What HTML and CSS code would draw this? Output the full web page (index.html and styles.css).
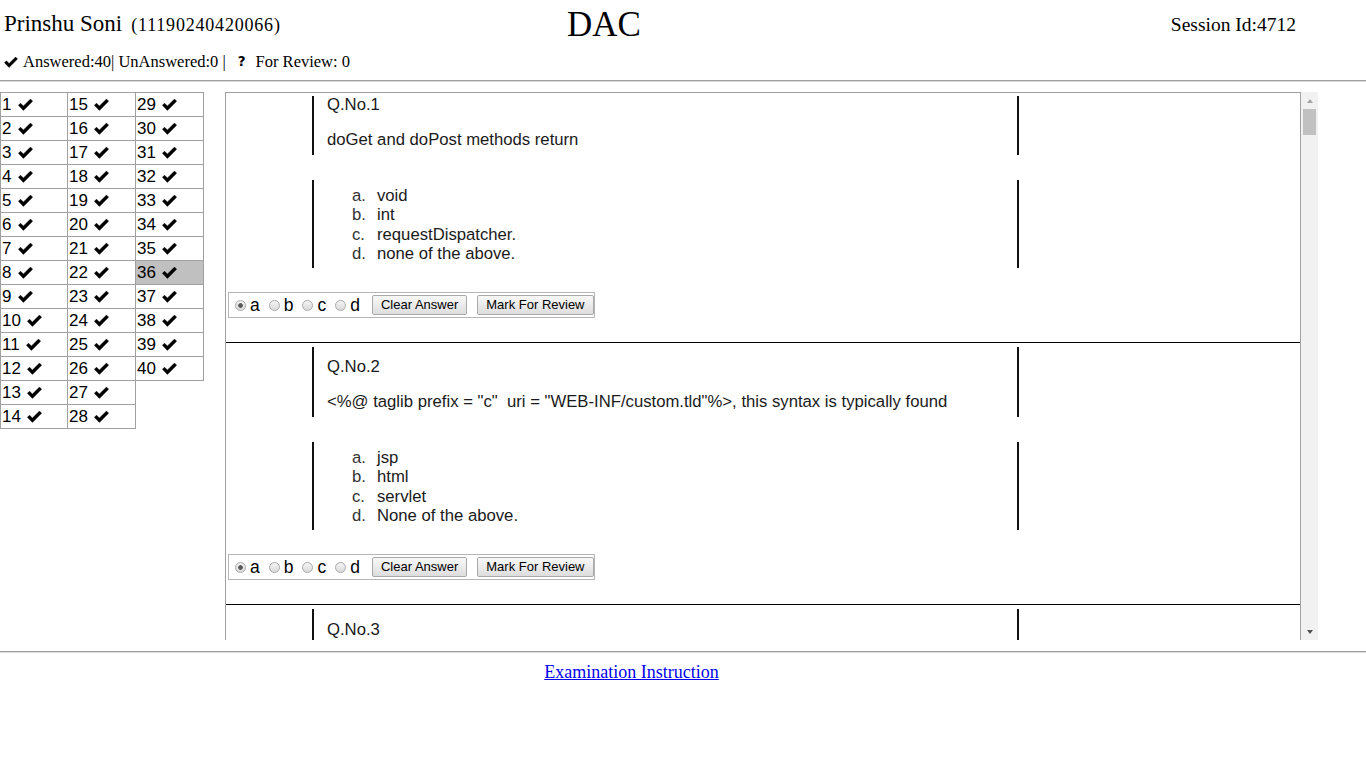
FILE: index.html
```html
<!DOCTYPE html>
<html lang="en">
<head>
<meta charset="utf-8">
<title>DAC Examination</title>
<link rel="stylesheet" href="styles.css">
</head>
<body>
<header class="top">
  <div class="name">Prinshu Soni<span class="prn">(11190240420066)</span></div>
  <div class="course">DAC</div>
  <div class="session">Session Id:4712</div>
</header>
<div class="stats"><svg class="chk-s" viewBox="0 0 15 12" width="14" height="11"><polygon points="0.4,6.3 2.5,4.2 5.4,7.1 12.5,0.1 14.6,2.2 5.4,11.4" fill="#000" stroke="#000" stroke-width="0.5" stroke-linejoin="round"/></svg>Answered:40| UnAnswered:0 |<span class="qm">?</span>For Review: 0</div>
<div class="rule"></div>

<main class="main">
  <nav class="qnav">
    <div class="cell">1<svg class="chk" viewBox="0 0 15 12"><polygon points="0.4,6.3 2.5,4.2 5.4,7.1 12.5,0.1 14.6,2.2 5.4,11.4"/></svg></div>
    <div class="cell">2<svg class="chk" viewBox="0 0 15 12"><polygon points="0.4,6.3 2.5,4.2 5.4,7.1 12.5,0.1 14.6,2.2 5.4,11.4"/></svg></div>
    <div class="cell">3<svg class="chk" viewBox="0 0 15 12"><polygon points="0.4,6.3 2.5,4.2 5.4,7.1 12.5,0.1 14.6,2.2 5.4,11.4"/></svg></div>
    <div class="cell">4<svg class="chk" viewBox="0 0 15 12"><polygon points="0.4,6.3 2.5,4.2 5.4,7.1 12.5,0.1 14.6,2.2 5.4,11.4"/></svg></div>
    <div class="cell">5<svg class="chk" viewBox="0 0 15 12"><polygon points="0.4,6.3 2.5,4.2 5.4,7.1 12.5,0.1 14.6,2.2 5.4,11.4"/></svg></div>
    <div class="cell">6<svg class="chk" viewBox="0 0 15 12"><polygon points="0.4,6.3 2.5,4.2 5.4,7.1 12.5,0.1 14.6,2.2 5.4,11.4"/></svg></div>
    <div class="cell">7<svg class="chk" viewBox="0 0 15 12"><polygon points="0.4,6.3 2.5,4.2 5.4,7.1 12.5,0.1 14.6,2.2 5.4,11.4"/></svg></div>
    <div class="cell">8<svg class="chk" viewBox="0 0 15 12"><polygon points="0.4,6.3 2.5,4.2 5.4,7.1 12.5,0.1 14.6,2.2 5.4,11.4"/></svg></div>
    <div class="cell">9<svg class="chk" viewBox="0 0 15 12"><polygon points="0.4,6.3 2.5,4.2 5.4,7.1 12.5,0.1 14.6,2.2 5.4,11.4"/></svg></div>
    <div class="cell">10<svg class="chk" viewBox="0 0 15 12"><polygon points="0.4,6.3 2.5,4.2 5.4,7.1 12.5,0.1 14.6,2.2 5.4,11.4"/></svg></div>
    <div class="cell">11<svg class="chk" viewBox="0 0 15 12"><polygon points="0.4,6.3 2.5,4.2 5.4,7.1 12.5,0.1 14.6,2.2 5.4,11.4"/></svg></div>
    <div class="cell">12<svg class="chk" viewBox="0 0 15 12"><polygon points="0.4,6.3 2.5,4.2 5.4,7.1 12.5,0.1 14.6,2.2 5.4,11.4"/></svg></div>
    <div class="cell">13<svg class="chk" viewBox="0 0 15 12"><polygon points="0.4,6.3 2.5,4.2 5.4,7.1 12.5,0.1 14.6,2.2 5.4,11.4"/></svg></div>
    <div class="cell">14<svg class="chk" viewBox="0 0 15 12"><polygon points="0.4,6.3 2.5,4.2 5.4,7.1 12.5,0.1 14.6,2.2 5.4,11.4"/></svg></div>
    <div class="cell">15<svg class="chk" viewBox="0 0 15 12"><polygon points="0.4,6.3 2.5,4.2 5.4,7.1 12.5,0.1 14.6,2.2 5.4,11.4"/></svg></div>
    <div class="cell">16<svg class="chk" viewBox="0 0 15 12"><polygon points="0.4,6.3 2.5,4.2 5.4,7.1 12.5,0.1 14.6,2.2 5.4,11.4"/></svg></div>
    <div class="cell">17<svg class="chk" viewBox="0 0 15 12"><polygon points="0.4,6.3 2.5,4.2 5.4,7.1 12.5,0.1 14.6,2.2 5.4,11.4"/></svg></div>
    <div class="cell">18<svg class="chk" viewBox="0 0 15 12"><polygon points="0.4,6.3 2.5,4.2 5.4,7.1 12.5,0.1 14.6,2.2 5.4,11.4"/></svg></div>
    <div class="cell">19<svg class="chk" viewBox="0 0 15 12"><polygon points="0.4,6.3 2.5,4.2 5.4,7.1 12.5,0.1 14.6,2.2 5.4,11.4"/></svg></div>
    <div class="cell">20<svg class="chk" viewBox="0 0 15 12"><polygon points="0.4,6.3 2.5,4.2 5.4,7.1 12.5,0.1 14.6,2.2 5.4,11.4"/></svg></div>
    <div class="cell">21<svg class="chk" viewBox="0 0 15 12"><polygon points="0.4,6.3 2.5,4.2 5.4,7.1 12.5,0.1 14.6,2.2 5.4,11.4"/></svg></div>
    <div class="cell">22<svg class="chk" viewBox="0 0 15 12"><polygon points="0.4,6.3 2.5,4.2 5.4,7.1 12.5,0.1 14.6,2.2 5.4,11.4"/></svg></div>
    <div class="cell">23<svg class="chk" viewBox="0 0 15 12"><polygon points="0.4,6.3 2.5,4.2 5.4,7.1 12.5,0.1 14.6,2.2 5.4,11.4"/></svg></div>
    <div class="cell">24<svg class="chk" viewBox="0 0 15 12"><polygon points="0.4,6.3 2.5,4.2 5.4,7.1 12.5,0.1 14.6,2.2 5.4,11.4"/></svg></div>
    <div class="cell">25<svg class="chk" viewBox="0 0 15 12"><polygon points="0.4,6.3 2.5,4.2 5.4,7.1 12.5,0.1 14.6,2.2 5.4,11.4"/></svg></div>
    <div class="cell">26<svg class="chk" viewBox="0 0 15 12"><polygon points="0.4,6.3 2.5,4.2 5.4,7.1 12.5,0.1 14.6,2.2 5.4,11.4"/></svg></div>
    <div class="cell">27<svg class="chk" viewBox="0 0 15 12"><polygon points="0.4,6.3 2.5,4.2 5.4,7.1 12.5,0.1 14.6,2.2 5.4,11.4"/></svg></div>
    <div class="cell">28<svg class="chk" viewBox="0 0 15 12"><polygon points="0.4,6.3 2.5,4.2 5.4,7.1 12.5,0.1 14.6,2.2 5.4,11.4"/></svg></div>
    <div class="cell">29<svg class="chk" viewBox="0 0 15 12"><polygon points="0.4,6.3 2.5,4.2 5.4,7.1 12.5,0.1 14.6,2.2 5.4,11.4"/></svg></div>
    <div class="cell">30<svg class="chk" viewBox="0 0 15 12"><polygon points="0.4,6.3 2.5,4.2 5.4,7.1 12.5,0.1 14.6,2.2 5.4,11.4"/></svg></div>
    <div class="cell">31<svg class="chk" viewBox="0 0 15 12"><polygon points="0.4,6.3 2.5,4.2 5.4,7.1 12.5,0.1 14.6,2.2 5.4,11.4"/></svg></div>
    <div class="cell">32<svg class="chk" viewBox="0 0 15 12"><polygon points="0.4,6.3 2.5,4.2 5.4,7.1 12.5,0.1 14.6,2.2 5.4,11.4"/></svg></div>
    <div class="cell">33<svg class="chk" viewBox="0 0 15 12"><polygon points="0.4,6.3 2.5,4.2 5.4,7.1 12.5,0.1 14.6,2.2 5.4,11.4"/></svg></div>
    <div class="cell">34<svg class="chk" viewBox="0 0 15 12"><polygon points="0.4,6.3 2.5,4.2 5.4,7.1 12.5,0.1 14.6,2.2 5.4,11.4"/></svg></div>
    <div class="cell">35<svg class="chk" viewBox="0 0 15 12"><polygon points="0.4,6.3 2.5,4.2 5.4,7.1 12.5,0.1 14.6,2.2 5.4,11.4"/></svg></div>
    <div class="cell current">36<svg class="chk" viewBox="0 0 15 12"><polygon points="0.4,6.3 2.5,4.2 5.4,7.1 12.5,0.1 14.6,2.2 5.4,11.4"/></svg></div>
    <div class="cell">37<svg class="chk" viewBox="0 0 15 12"><polygon points="0.4,6.3 2.5,4.2 5.4,7.1 12.5,0.1 14.6,2.2 5.4,11.4"/></svg></div>
    <div class="cell">38<svg class="chk" viewBox="0 0 15 12"><polygon points="0.4,6.3 2.5,4.2 5.4,7.1 12.5,0.1 14.6,2.2 5.4,11.4"/></svg></div>
    <div class="cell">39<svg class="chk" viewBox="0 0 15 12"><polygon points="0.4,6.3 2.5,4.2 5.4,7.1 12.5,0.1 14.6,2.2 5.4,11.4"/></svg></div>
    <div class="cell">40<svg class="chk" viewBox="0 0 15 12"><polygon points="0.4,6.3 2.5,4.2 5.4,7.1 12.5,0.1 14.6,2.2 5.4,11.4"/></svg></div>
  </nav>

  <section class="panel">
    <div class="qscroll">
      <div class="q">
        <div class="qbox">
          <p class="qno">Q.No.1</p>
          <p class="qtext">doGet and doPost methods return</p>
        </div>
        <div class="opts">
          <div class="opt"><span class="mk">a.</span>void</div>
          <div class="opt"><span class="mk">b.</span>int</div>
          <div class="opt"><span class="mk">c.</span>requestDispatcher.</div>
          <div class="opt"><span class="mk">d.</span>none of the above.</div>
        </div>
        <div class="ans">
          <label class="rl"><input type="radio" name="q1" checked>a</label>
          <label class="rl"><input type="radio" name="q1">b</label>
          <label class="rl"><input type="radio" name="q1">c</label>
          <label class="rl"><input type="radio" name="q1">d</label>
          <button class="btn">Clear Answer</button>
          <button class="btn btn-review">Mark For Review</button>
        </div>
      </div>

      <div class="q">
        <div class="qbox qbox-tall">
          <p class="qno">Q.No.2</p>
          <p class="qtext">&lt;%@ taglib prefix = "c"&nbsp; uri = "WEB-INF/custom.tld"%&gt;, this syntax is typically found</p>
        </div>
        <div class="opts">
          <div class="opt"><span class="mk">a.</span>jsp</div>
          <div class="opt"><span class="mk">b.</span>html</div>
          <div class="opt"><span class="mk">c.</span>servlet</div>
          <div class="opt"><span class="mk">d.</span>None of the above.</div>
        </div>
        <div class="ans">
          <label class="rl"><input type="radio" name="q2" checked>a</label>
          <label class="rl"><input type="radio" name="q2">b</label>
          <label class="rl"><input type="radio" name="q2">c</label>
          <label class="rl"><input type="radio" name="q2">d</label>
          <button class="btn">Clear Answer</button>
          <button class="btn btn-review">Mark For Review</button>
        </div>
      </div>

      <div class="q">
        <div class="qbox qbox-tall3">
          <p class="qno">Q.No.3</p>
        </div>
      </div>
    </div>
    <div class="sbar" aria-hidden="true">
      <div class="sb-btn"><span class="arr-up"></span></div>
      <div class="thumb"></div>
      <div class="sb-track"></div>
      <div class="sb-btn"><span class="arr-down"></span></div>
    </div>
  </section>
</main>

<div class="rule rule-foot"></div>
<footer class="foot"><a href="#">Examination Instruction</a></footer>
</body>
</html>
```
FILE: styles.css
```css
* { box-sizing: border-box; }

html, body {
  margin: 0;
  padding: 0;
  background: #fff;
}

body {
  font-family: "Liberation Serif", "Times New Roman", serif;
  color: #000;
  width: 1366px;
  height: 768px;
  overflow: hidden;
}

/* ---------- header ---------- */
.top {
  display: grid;
  grid-template-columns: 567px auto 1fr;
  height: 47px;
}

.name {
  padding: 11px 0 0 4px;
  font-size: 23px;
  line-height: 26px;
  white-space: nowrap;
}

.prn {
  font-size: 18px;
  letter-spacing: 0.8px;
  margin-left: 9px;
}

.course {
  padding-top: 5px;
  font-size: 35px;
  line-height: 40px;
}

.session {
  justify-self: end;
  margin-right: 70px;
  padding-top: 14px;
  font-size: 19.5px;
  line-height: 22px;
  white-space: nowrap;
}

.stats {
  height: 24px;
  padding: 4px 0 0 4px;
  font-size: 16.5px;
  line-height: 20px;
  white-space: nowrap;
}

.chk-s {
  margin-right: 5px;
  vertical-align: -1px;
}

.qm {
  font-family: "DejaVu Sans", sans-serif;
  font-weight: bold;
  font-size: 13.5px;
  margin: 0 10px 0 12px;
  vertical-align: 1px;
}

.rule {
  height: 2px;
  margin-top: 9px;
  border-top: 1px solid #a0a0a0;
  border-bottom: 1px solid #dcdcdc;
}

/* ---------- main ---------- */
.main {
  display: flex;
  align-items: flex-start;
  margin-top: 10px;
  height: 548px;
}

.qnav {
  display: grid;
  grid-template-columns: 67px 68px 68px;
  grid-template-rows: repeat(14, 24px);
  grid-auto-flow: column;
  width: 203px;
  flex: none;
}

.cell {
  margin: 0 -1px -1px 0;
  border: 1px solid #a0a0a0;
  padding-left: 1px;
  display: flex;
  align-items: center;
  font-family: "Liberation Sans", Arial, sans-serif;
  font-size: 17px;
  line-height: 20px;
  color: #000;
}

.cell.current {
  background: #c0c0c0;
}

.chk {
  width: 15px;
  height: 12px;
  margin-left: 6.5px;
  fill: #000;
  stroke: #000;
  stroke-width: 0.5;
  stroke-linejoin: round;
}

.panel {
  display: flex;
  margin-left: 22px;
  height: 548px;
  flex: none;
}

.qscroll {
  width: 1076px;
  height: 548px;
  overflow: hidden;
  border: 1px solid #a0a0a0;
  border-bottom: 0;
  font-family: "Liberation Sans", Arial, sans-serif;
  color: #1a1a1a;
}

.q {
  border-bottom: 1px solid #000;
  padding-bottom: 24px;
}

.qbox {
  margin: 4px 0 0 86px;
  width: 707px;
  height: 59px;
  border-left: 2px solid #111;
  border-right: 2px solid #111;
  padding: 0 0 0 13px;
  font-size: 16.7px;
  line-height: 18px;
}

.q:first-child .qbox {
  margin-top: 3px;
}

.qbox-tall {
  height: 70px;
  padding-top: 11px;
}

.qbox-tall3 {
  height: 70px;
  padding-top: 12px;
}

.qno,
.qtext {
  margin: 0;
  white-space: nowrap;
}

.qtext {
  margin-top: 17px;
}

.opts {
  margin: 25px 0 0 86px;
  width: 707px;
  height: 88px;
  border-left: 2px solid #111;
  border-right: 2px solid #111;
  padding: 1px 0 0 38px;
  display: flex;
  flex-direction: column;
  justify-content: center;
  font-size: 16.7px;
  line-height: 19.3px;
}

.opt {
  display: flex;
  white-space: nowrap;
}

.mk {
  width: 25px;
  color: #333;
}

.ans {
  display: flex;
  align-items: center;
  width: max-content;
  height: 26px;
  margin: 24px 0 0 2px;
  padding-left: 6px;
  border: 1px solid #b5b5b5;
  font-size: 17.5px;
  color: #000;
}

.rl {
  display: flex;
  align-items: center;
  margin-right: 9px;
  line-height: 20px;
}

.rl input {
  -webkit-appearance: none;
  appearance: none;
  width: 11px;
  height: 11px;
  margin: 0 4px 0 0;
  border: 1px solid #a9a9a9;
  border-radius: 50%;
  background: linear-gradient(#f4f4f4, #dadada);
}

.rl input:checked {
  background: radial-gradient(circle, #5a5a5a 0 2px, transparent 2.6px), linear-gradient(#f4f4f4, #dadada);
}

.btn {
  height: 20px;
  margin-left: 3px;
  padding: 0 8px;
  border: 1px solid #a9a9a9;
  border-radius: 2px;
  background: linear-gradient(#f8f8f8, #dddddd);
  font-family: "Liberation Sans", Arial, sans-serif;
  font-size: 13px;
  line-height: 18px;
  color: #000;
}

.btn-review {
  margin-left: 10px;
}

/* ---------- scrollbar ---------- */
.sbar {
  width: 17px;
  height: 548px;
  background: #f1f1f1;
  display: flex;
  flex-direction: column;
  align-items: center;
}

.sb-btn {
  width: 17px;
  height: 17px;
  display: flex;
  align-items: center;
  justify-content: center;
}

.arr-up {
  width: 0;
  height: 0;
  border-left: 3.5px solid transparent;
  border-right: 3.5px solid transparent;
  border-bottom: 4px solid #a3a3a3;
}

.arr-down {
  width: 0;
  height: 0;
  border-left: 3.5px solid transparent;
  border-right: 3.5px solid transparent;
  border-top: 4px solid #505050;
}

.thumb {
  width: 13px;
  height: 26px;
  background: #c1c1c1;
}

.sb-track {
  flex: 1;
}

/* ---------- footer ---------- */
.rule-foot {
  margin-top: 11px;
}

.foot {
  width: 1263px;
  margin-top: 9px;
  text-align: center;
  font-size: 18px;
  line-height: 20px;
}

.foot a {
  color: #0000ee;
}
```
